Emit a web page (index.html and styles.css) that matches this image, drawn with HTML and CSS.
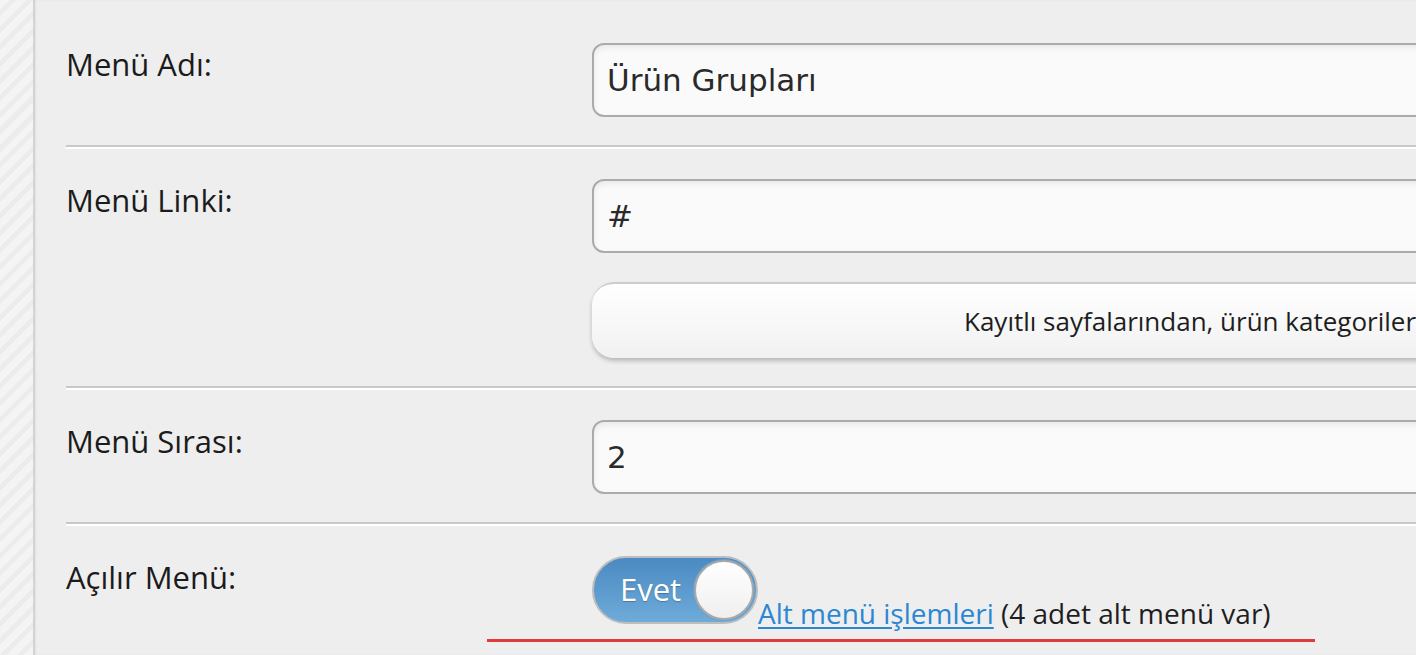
FILE: index.html
```html
<!DOCTYPE html>
<html lang="tr">
<head>
    <meta charset="UTF-8">
    <title>Menü Düzenle</title>
    <link rel="stylesheet" href="styles.css">
</head>
<body>

<div class="sidebar"></div>

<div class="main">
    <form class="menu-form">
        <div class="row">
            <label class="label" for="menuName">Menü Adı:</label>
            <div class="field">
                <input type="text" id="menuName" class="text-input" value="Ürün Grupları">
            </div>
        </div>

        <div class="row">
            <label class="label" for="menuLink">Menü Linki:</label>
            <div class="field">
                <input type="text" id="menuLink" class="text-input" value="#">
                <button type="button" class="pick-button">Kayıtlı sayfalarından, ürün kategorilerinden veya markalardan seçiniz</button>
            </div>
        </div>

        <div class="row">
            <label class="label" for="menuOrder">Menü Sırası:</label>
            <div class="field">
                <input type="text" id="menuOrder" class="text-input" value="2">
            </div>
        </div>

        <div class="row last">
            <label class="label">Açılır Menü:</label>
            <div class="field">
                <span class="toggle"><span class="toggle-text">Evet</span><span class="knob"></span></span><a href="#" class="sub-link">Alt menü işlemleri</a> (4 adet alt menü var)
            </div>
            <div class="red-line"></div>
        </div>
    </form>
</div>

</body>
</html>
```

FILE: styles.css
```css
html, body {
    margin: 0;
    height: 100%;
}
body {
    display: flex;
    background: #eeeeee;
    font-family: "Open Sans", Arial, sans-serif;
    color: #1e1e1e;
    overflow: hidden;
}
.sidebar {
    width: 33px;
    flex-shrink: 0;
    background: repeating-linear-gradient(-45deg, #f4f4f4 0, #f4f4f4 7px, #ececec 7px, #ececec 12px);
}
.main {
    flex: 1;
    border-left: 2px solid #d3d3d3;
    padding-left: 31px;
    overflow: hidden;
    box-shadow: inset 1px 0 2px rgba(0, 0, 0, 0.05);
}
.menu-form {
    padding-top: 13px;
}
.row {
    display: grid;
    grid-template-columns: 526px 1fr;
    padding: 30px 0 28px;
    border-bottom: 2px solid #c9c9c9;
}
.row + .row {
    border-top: 2px solid #ffffff;
}
.row.last {
    border-bottom: none;
}
.label {
    font-size: 31px;
    line-height: 40px;
    padding-top: 1px;
    color: #1b1b1b;
}
.field {
    min-width: 0;
    white-space: nowrap;
}
.text-input {
    display: block;
    box-sizing: border-box;
    width: 1200px;
    height: 74px;
    padding: 0 13px;
    border: 2px solid #ababab;
    border-radius: 12px;
    background: #fafafa;
    box-shadow: inset 0 3px 6px rgba(0, 0, 0, 0.07);
    font-family: "DejaVu Sans", Verdana, sans-serif;
    font-size: 31px;
    color: #2a2a2a;
    outline: none;
}
.pick-button {
    display: block;
    box-sizing: border-box;
    width: 1200px;
    height: 76px;
    margin-top: 29px;
    padding: 0 0 0 372px;
    border: none;
    border-top: 2px solid #cdcdcd;
    border-radius: 22px;
    background: linear-gradient(#ffffff, #f1f1f1);
    box-shadow: 0 3px 4px rgba(0, 0, 0, 0.22);
    font-family: "Open Sans", Arial, sans-serif;
    font-size: 26px;
    color: #1e1e1e;
    text-align: left;
    cursor: pointer;
}
.toggle {
    display: inline-block;
    position: relative;
    box-sizing: border-box;
    width: 166px;
    height: 68px;
    border: 2px solid #bdbdbd;
    border-radius: 34px;
    background: linear-gradient(#4b8ac2, #6eabd9);
    overflow: hidden;
    vertical-align: baseline;
}
.toggle-text {
    display: block;
    padding-left: 26px;
    line-height: 62px;
    font-size: 31px;
    color: #ffffff;
    text-shadow: 0 1px 1px rgba(0, 0, 0, 0.25);
}
.knob {
    position: absolute;
    top: 2px;
    right: 2px;
    box-sizing: border-box;
    width: 60px;
    height: 60px;
    border: 2px solid #a9a9a9;
    border-radius: 50%;
    background: linear-gradient(#ffffff, #efefef);
    box-shadow: 0 0 0 1px #6aa2d0;
}
.field:has(.toggle) {
    font-size: 28px;
    color: #1e1e1e;
}
.sub-link {
    color: #2c87d3;
    text-decoration: underline;
    text-underline-offset: 3px;
}
.red-line {
    grid-column: 1 / 3;
    margin: 7px 0 0 421px;
    width: 828px;
    height: 3px;
    background: #e0393e;
}
```
